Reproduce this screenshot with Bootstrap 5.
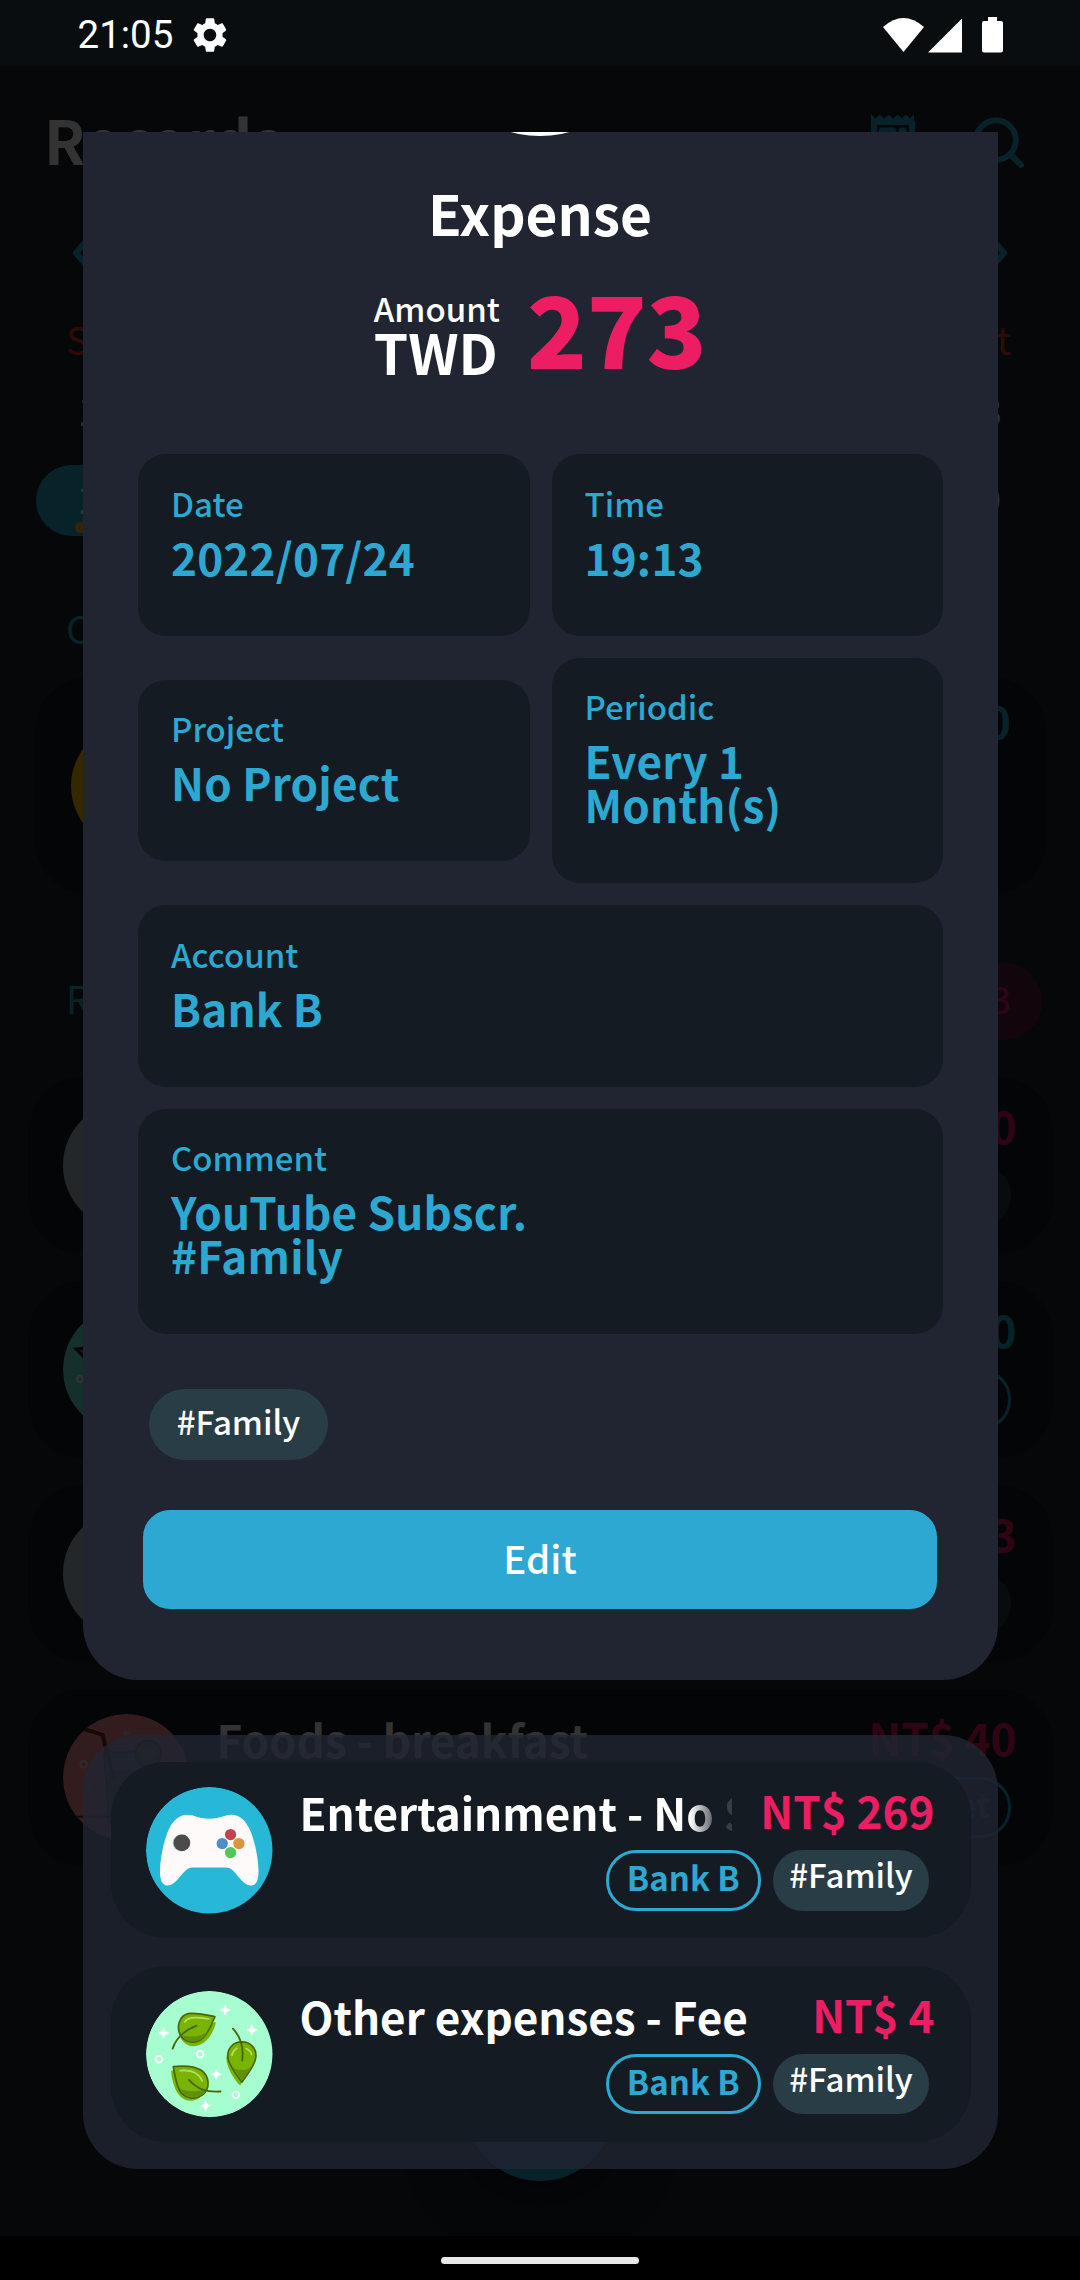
<!DOCTYPE html>
<html lang="en">
<head>
<meta charset="utf-8">
<meta name="viewport" content="width=1080">
<title>Records</title>
<link href="https://cdn.jsdelivr.net/npm/bootstrap@5.3.0/dist/css/bootstrap.min.css" rel="stylesheet">
<style>
:root{--sky:#2ca8d1;--rose:#ec1d62;--panel:#202531;--tile:#151b22;--tag:#293d47}
body{margin:0;background:#000;font-family:"Noto Sans CJK TC","Noto Sans",sans-serif}
.phone{width:1080px;height:2280px;background:#1e232d;color:#fff}
.sky{color:var(--sky)}
.rose{color:var(--rose)}
/* status bar */
.statusbar{height:66px;background:#090d10;padding:4px 76px 0 77.500px;font:400 38.5px/66px Roboto,sans-serif;z-index:5}
.scrim{background:rgba(0,0,0,.8)}
svg{display:block;flex:none}
/* dimmed list screen */
.screen-head{height:154px;padding:0 56px 0 44px}
.screen-title{font-size:60.5px;font-weight:700;line-height:60px;padding-top:43px}
.month-nav{height:66px;padding:0 70px}
.weekdays{height:86px;padding:0 69px 0 66px;font-size:38.5px;line-height:66px;padding-top:19px;color:#e8392c}
.week{height:88px;padding:0 78px;font-size:38.5px;line-height:66px;font-weight:500}
.week-now{height:71px;margin-top:5px;font-size:38.5px;font-weight:500}
.day-pill{width:134px;height:71px;border-radius:36px;background:var(--sky);margin-left:36px;padding:0 0 0 43px;line-height:64px}
.day-dot{width:11px;height:11px;border-radius:50%;background:#ffb900;left:75px;bottom:3px}
.last-day{margin-right:79px;line-height:64px}
.section-name{font-size:38.5px;font-weight:400;line-height:64px;padding-left:66px}
.wide-card{height:218px;margin:0 34px 0 35px;border-radius:55px;background:var(--tile);padding:15px 35px 0 36px}
.coin{width:126px;height:126px;border-radius:50%;background:#ffc800;margin-top:31px}
.sum-pill{height:77px;width:190px;border-radius:38px;background:#5c1f3c;margin-right:38px;padding-right:31px;font-size:38.5px;line-height:68px}
/* record rows */
.record{height:176.5px;border-radius:55px;background:var(--tile);padding:0 36px 0 35.5px}
.record-icon{width:126.5px;height:126.5px;margin:25px 27px 0 0;border-radius:50%}
.record-body{min-width:0}
.record-line{height:88px;font-size:44px;font-weight:700;padding-top:20px}
.record-name{line-height:60px;white-space:nowrap;overflow:hidden}
.record-name.fading{-webkit-mask-image:linear-gradient(90deg,#000 calc(100% - 42px),rgba(0,0,0,.18) calc(100% - 14px),rgba(0,0,0,.15));mask-image:linear-gradient(90deg,#000 calc(100% - 42px),rgba(0,0,0,.18) calc(100% - 14px),rgba(0,0,0,.15))}
.record-sum{line-height:57px;margin-left:28px;white-space:nowrap}
.record-tags{gap:12.5px;margin-right:5.5px}
.acct,.hashtag{height:60.5px;border-radius:30px;font-size:33px;line-height:49px;white-space:nowrap}
.acct{border:3px solid var(--sky);color:var(--sky);font-weight:700;padding:0 17.7px}
.hashtag{background:var(--tag);color:#fff;font-weight:500;padding:0 16.2px}
.record-list{margin:0 27.5px;gap:27.5px}
.fab{width:150px;height:150px;left:465px;top:2031px;background:var(--sky);box-shadow:0 10px 60px rgba(0,0,0,.6)}
/* dialogs */
.dialogs{padding-top:132px;padding-left:83px;padding-right:82px;gap:55px}
.sheet{height:1548px;background:var(--panel);border-radius:0 0 55px 55px;padding:47px 55px 0}
.knob{left:348px;top:-214px;width:218px;height:218px;background:#fff}
.sheet-clip{left:0;top:0;width:100%;height:40px;overflow:hidden}
.sheet-title{font-size:55px;font-weight:700;line-height:66px;padding-right:1px}
.sum-row{margin-top:45.3px;height:86px;gap:27px;padding-right:1px}
.sum-label{font-size:33px;font-weight:500;line-height:37px}
.sum-cur{font-size:55px;font-weight:700;line-height:49px}
.sum-val{font-size:99px;font-weight:900;line-height:72px;letter-spacing:-.5px}
.fields{margin-top:78px;gap:22px}
.fields .pair{gap:22px}
.field{flex:1 1 0;background:var(--tile);border-radius:28px;padding:33.5px 33px 57px;color:var(--sky)}
.field-name{font-size:33px;font-weight:500;line-height:30px;margin-bottom:17px}
.field-val{font-size:44px;font-weight:700;line-height:44px;letter-spacing:.22px}
.tag-lg{height:71px;border-radius:36px;background:var(--tag);font-size:33px;font-weight:500;line-height:65px;padding:0 27.7px;margin:55px 0 50px 11px}
.btn-edit,.btn-edit:hover{display:block;width:794px;height:99px;margin-left:5px;padding:0 0 5px;border:0;border-radius:27px;background:#2da8d2;color:#fff;font-size:38.5px;font-weight:500;line-height:92px}
.linked{height:434px;border-radius:55px;background:rgba(32,38,50,.8);padding:27px 27.5px;gap:27.5px}
.navbar-sys{height:44px;background:#000;padding-top:21px;z-index:5}
.navbar-sys span{width:198px;height:7px;border-radius:4px;background:#e8e8e8}
</style>
</head>
<body>
<div class="phone position-relative overflow-hidden d-flex flex-column">

  <header class="statusbar position-relative d-flex align-items-center justify-content-between flex-shrink-0">
    <div class="d-flex align-items-center">
      <span>21:05</span>
      <svg class="ms-3" width="42" height="42" viewBox="0 0 24 24" fill="#fff"><path d="M19.14 12.94c.04-.3.06-.61.06-.94 0-.32-.02-.64-.07-.94l2.03-1.58c.18-.14.23-.41.12-.61l-1.92-3.32c-.12-.22-.37-.29-.59-.22l-2.39.96c-.5-.38-1.03-.7-1.62-.94l-.36-2.54c-.04-.24-.24-.41-.48-.41h-3.84c-.24 0-.43.17-.47.41l-.36 2.54c-.59.24-1.13.57-1.62.94l-2.39-.96c-.22-.08-.47 0-.59.22L2.74 8.87c-.12.21-.08.47.12.61l2.03 1.58c-.05.3-.09.63-.09.94s.02.64.07.94l-2.03 1.58c-.18.14-.23.41-.12.61l1.92 3.32c.12.22.37.29.59.22l2.39-.96c.5.38 1.03.7 1.62.94l.36 2.54c.05.24.24.41.48.41h3.84c.24 0 .44-.17.47-.41l.36-2.54c.59-.24 1.13-.56 1.62-.94l2.39.96c.22.08.47 0 .59-.22l1.92-3.32c.12-.22.07-.47-.12-.61l-2.01-1.58zM12 15.6c-1.98 0-3.6-1.62-3.6-3.6s1.62-3.6 3.6-3.6 3.6 1.62 3.6 3.6-1.62 3.6-3.6 3.6z"/></svg>
    </div>
    <svg width="121" height="36" viewBox="0 0 121 36" fill="#fff"><path d="M0 10Q20.500-8 41 10L20.500 35Z"/><path d="M45 35.500L79 1.500V35.500Z"/><path d="M105 0h9v4h4a2 2 0 0 1 2 2v27.500a2 2 0 0 1-2 2H101a2 2 0 0 1-2-2V6a2 2 0 0 1 2-2h4z"/></svg>
  </header>

  <main class="flex-grow-1 overflow-hidden">
    <div class="screen-head d-flex justify-content-between">
      <div class="screen-title">Records</div>
      <svg width="155" height="60" viewBox="0 0 155 60" style="margin-top:47px" fill="none" stroke="#2ca8d1"><path d="M5 50V8M43 50V8M5 9H43" stroke-width="6"/><path d="M2 10V1L6.300 5.500 11 1.500 15.300 5.500 19.500 1.500 24 5.500 28.500 1.500 33 5.500 37 1.500 41 5.500 45 1V10Z" fill="#2ca8d1" stroke="none"/><path d="M13 18H24M33 18H34" stroke-width="7" stroke-linecap="round"/><circle cx="127" cy="27" r="19.800" stroke-width="6"/><path d="M142 42L152 52" stroke-width="6" stroke-linecap="round"/></svg>
    </div>
    <div class="month-nav d-flex justify-content-between align-items-center">
      <svg width="26" height="50" viewBox="0 0 26 50" fill="none" stroke="#2ca8d1" stroke-width="6" stroke-linecap="round" stroke-linejoin="round"><path d="M20 9L6 25 20 41"/></svg>
      <svg width="26" height="50" viewBox="0 0 26 50" fill="none" stroke="#2ca8d1" stroke-width="6" stroke-linecap="round" stroke-linejoin="round"><path d="M6 9L20 25 6 41"/></svg>
    </div>
    <div class="weekdays d-flex justify-content-between"><span>Sun</span><span>Sat</span></div>
    <div class="week d-flex justify-content-between pt-1"><span>17</span><span>23</span></div>
    <div class="week-now d-flex justify-content-between position-relative">
      <div class="day-pill">24</div><span class="day-dot position-absolute"></span><span class="last-day">30</span>
    </div>
    <div class="section-name sky" style="margin-top:59px">C</div>
    <div class="wide-card d-flex justify-content-between" style="margin-top:18px">
      <div class="coin"></div><div class="sky fw-bold" style="font-size:44px;line-height:57px">0</div>
    </div>
    <div class="d-flex justify-content-between" style="margin-top:68px">
      <div class="section-name sky" style="line-height:69px">R</div>
      <div class="sum-pill rose text-end">3</div>
    </div>
    <div class="record-list d-flex flex-column" style="margin-top:37px">
      <div class="record d-flex">
        <div class="record-icon" style="background:#b4c0cd"></div>
        <div class="record-body flex-grow-1"><div class="record-line d-flex justify-content-end"><div class="record-sum rose">0</div></div>
          <div class="record-tags d-flex justify-content-end"><div class="hashtag px-5"></div></div></div>
      </div>
      <div class="record d-flex">
        <svg class="record-icon" viewBox="0 0 126.500 126.500"><circle cx="63.250" cy="63.250" r="63.250" fill="#6bebdc"/><path d="M13 43L32 41 24 54Z" fill="#a66f80" stroke="#222" stroke-width="3"/><circle cx="17" cy="73" r="3" fill="none" stroke="#fff" stroke-width="2"/></svg>
        <div class="record-body flex-grow-1"><div class="record-line d-flex justify-content-end"><div class="record-sum sky">0</div></div>
          <div class="record-tags d-flex justify-content-end"><div class="acct px-5"></div></div></div>
      </div>
      <div class="record d-flex">
        <div class="record-icon" style="background:#b4c0cd"></div>
        <div class="record-body flex-grow-1"><div class="record-line d-flex justify-content-end"><div class="record-sum rose">3</div></div>
          <div class="record-tags d-flex justify-content-end"><div class="hashtag px-5"></div></div></div>
      </div>
      <div class="record d-flex">
        <svg class="record-icon" viewBox="42 71 380 380"><circle cx="232" cy="261" r="190" fill="#ff8c96"/><path d="M82 380H180L166 196Q164 184 178 184H280Q292 184 292 196L276 400" fill="#9ab" stroke="#443" stroke-width="6"/><path d="M172 240H288L276 400H182Z" fill="#6c8a50"/><circle cx="298" cy="190" r="39" fill="#8c9a3c" stroke="#443" stroke-width="6"/><circle cx="298" cy="190" r="24" fill="#b4a848"/><path d="M106 116L161 134 196 274" fill="none" stroke="#6e370a" stroke-width="12"/><g fill="#ccc"><path d="M231 113Q233 125 246 128 233 130 231 143 229 130 216 128 229 125 231 113ZM122 283Q124 295 137 297 124 299 122 311 120 299 107 297 120 295 122 283ZM374 203Q376 213 387 215 376 217 374 227 372 217 361 215 372 213 374 203Z"/></g><circle cx="104" cy="222" r="10" fill="none" stroke="#ddd" stroke-width="5"/></svg>
        <div class="record-body flex-grow-1"><div class="record-line d-flex justify-content-between"><div class="record-name">Foods - breakfast</div><div class="record-sum rose">NT$ 40</div></div>
          <div class="record-tags d-flex justify-content-end"><div class="acct">Wallet</div></div></div>
      </div>
    </div>
    <div class="fab rounded-circle position-absolute"></div>
  </main>

  <div class="scrim position-absolute top-0 start-0 w-100 h-100"></div>

  <div class="dialogs position-absolute top-0 start-0 w-100 d-flex flex-column">
    <section class="sheet position-relative">
      <div class="sheet-clip position-absolute"><div class="knob rounded-circle position-absolute"></div></div>
      <div class="sheet-title text-center">Expense</div>
      <div class="sum-row d-flex justify-content-center align-items-start">
        <div><div class="sum-label">Amount</div><div class="sum-cur">TWD</div></div>
        <div class="sum-val rose">273</div>
      </div>
      <div class="fields d-flex flex-column">
        <div class="pair d-flex align-items-center">
          <div class="field"><div class="field-name">Date</div><div class="field-val">2022/07/24</div></div>
          <div class="field"><div class="field-name">Time</div><div class="field-val">19:13</div></div>
        </div>
        <div class="pair d-flex align-items-center">
          <div class="field"><div class="field-name">Project</div><div class="field-val">No Project</div></div>
          <div class="field"><div class="field-name">Periodic</div><div class="field-val">Every 1<br>Month(s)</div></div>
        </div>
        <div class="field"><div class="field-name">Account</div><div class="field-val">Bank B</div></div>
        <div class="field"><div class="field-name">Comment</div><div class="field-val">YouTube Subscr.<br>#Family</div></div>
      </div>
      <div class="d-flex"><div class="tag-lg">#Family</div></div>
      <button type="button" class="btn btn-edit">Edit</button>
    </section>

    <section class="linked d-flex flex-column">
      <div class="record d-flex">
        <svg class="record-icon" viewBox="77 52 380 380"><circle cx="267" cy="242" r="190" fill="#27b7d7"/><path d="M267 147C300 147 313 135 334 135C358 135 376 152 388 178C404 212 415 270 415 306C415 332 408 348 393 348C366 348 350 308 330 297Q325 294 316 294H218Q209 294 204 297C184 308 168 348 141 348C126 348 119 332 119 306C119 270 130 212 146 178C158 152 176 135 202 135C222 135 234 147 267 147Z" fill="#fffafa"/><circle cx="182" cy="220" r="25" fill="#9fd0d4"/><circle cx="185" cy="220" r="25" fill="#4a4b4a"/><circle cx="331" cy="195" r="17" fill="#c2434f"/><circle cx="306" cy="222" r="17" fill="#4b8fc6"/><circle cx="356" cy="222" r="17" fill="#d9963b"/><circle cx="331" cy="249" r="17" fill="#50c759"/></svg>
        <div class="record-body flex-grow-1">
          <div class="record-line d-flex justify-content-between"><div class="record-name fading flex-grow-1">Entertainment - No Sub</div><div class="record-sum rose">NT$ 269</div></div>
          <div class="record-tags d-flex justify-content-end"><div class="acct">Bank B</div><div class="hashtag">#Family</div></div>
        </div>
      </div>
      <div class="record d-flex">
        <svg class="record-icon" viewBox="77 663 380 380"><circle cx="267" cy="853" r="190" fill="#a6fdd0"/>
          <g fill="#78b400"><path d="M287 757C277 800 250 830 215 829C190 825 178 805 178 790L284 757ZM152 904C158 950 172 990 210 993C230 992 238 985 245 976L160 900ZM318 862C318 890 340 928 360 947L378 915 322 850Z"/></g>
          <g stroke="#4a6606" stroke-width="5" stroke-linejoin="round" fill="#78b400"><path d="M284 740C250 733 222 728 204 731C176 737 168 772 180 795C192 819 228 824 248 804C266 788 274 762 284 740Z"/><path d="M159 890C190 887 222 888 243 901C270 920 269 958 247 975C220 994 187 983 176 958C166 936 163 912 159 890Z"/><path d="M365 937C350 915 325 888 323 862C320 835 340 816 365 816C391 816 410 836 407 862C404 888 380 914 365 937Z"/></g>
          <g fill="#5f9009"><path d="M184 795C205 802 240 803 262 785C250 806 236 816 218 815C200 814 190 807 184 795ZM178 955C200 968 240 967 261 955C254 974 236 982 217 981C198 979 185 970 178 955ZM336 889C350 905 380 905 395 888C388 902 375 918 365 932C356 917 344 903 336 889Z"/></g>
          <g fill="none" stroke="#b9dd68" stroke-width="5" stroke-linecap="round"><path d="M193 756C205 738 235 742 266 747M180 902C210 899 235 907 246 933M335 856Q338 842 350 835M378 836Q391 842 394 854"/></g>
          <g fill="none" stroke="#4a6606" stroke-width="5.500" stroke-linecap="round"><path d="M229 767C190 782 168 803 157 836M206 930C230 956 255 968 301 965M338 776C357 796 372 826 366 872"/></g>
          <path fill="#fff" d="M315 704Q317 718 330 720 317 722 315 736 313 722 300 720 313 718 315 704ZM130 773Q132 787 145 789 132 791 130 805 128 791 115 789 128 787 130 773ZM395 764Q397 778 410 780 397 782 395 796 393 782 380 780 393 778 395 764ZM288 897Q290 911 303 913 290 915 288 929 286 915 273 913 286 911 288 897ZM256 992Q258 1006 271 1008 258 1010 256 1024 254 1010 241 1008 254 1006 256 992Z" stroke="#fff" stroke-width="2"/>
          <g fill="none" stroke="#fff" stroke-width="5"><circle cx="116" cy="868" r="10"/><circle cx="240" cy="853" r="10"/><circle cx="347" cy="975" r="10"/></g></svg>
        <div class="record-body flex-grow-1">
          <div class="record-line d-flex justify-content-between"><div class="record-name">Other expenses - Fee</div><div class="record-sum rose">NT$ 4</div></div>
          <div class="record-tags d-flex justify-content-end"><div class="acct">Bank B</div><div class="hashtag">#Family</div></div>
        </div>
      </div>
    </section>
  </div>

  <footer class="navbar-sys position-relative d-flex justify-content-center flex-shrink-0"><span></span></footer>
</div>
<script src="https://cdn.jsdelivr.net/npm/bootstrap@5.3.0/dist/js/bootstrap.bundle.min.js"></script>
</body>
</html>
